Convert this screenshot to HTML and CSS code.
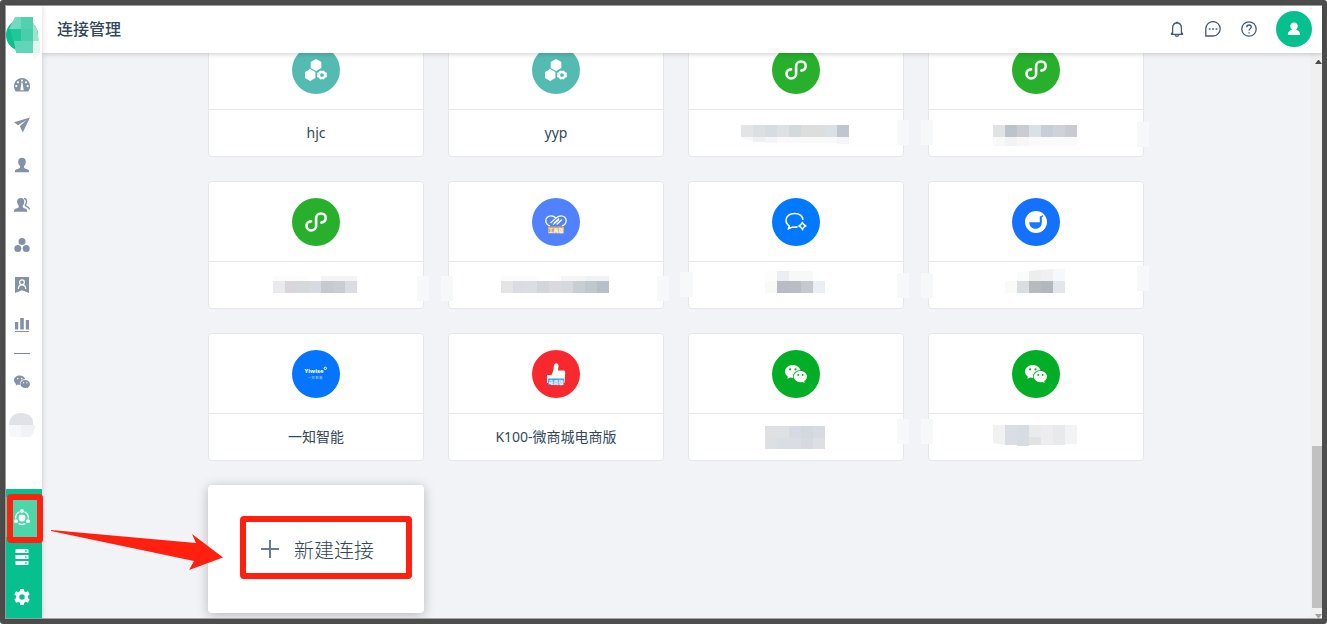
FILE: index.html
```html
<!DOCTYPE html>
<html lang="zh-CN">
<head>
  <meta charset="UTF-8">
  <meta name="viewport" content="width=device-width, initial-scale=1.0">
  <title>连接管理</title>
  <link rel="stylesheet" href="styles.css">
</head>
<body>
  <!-- Shared icons -->
  <svg class="sprite" aria-hidden="true">
    <symbol id="i-user" viewBox="0 0 16 16">
      <path d="M8 .8c2.500 0 3.800 1.600 3.800 3.900 0 1.800-.6 3.400-1.800 4.400v1.300c.4.9 1.400 1.200 2.800 1.600 1.600.5 2.300 1.200 2.300 2.400v.8H.9v-.8c0-1.200.7-1.900 2.300-2.400 1.400-.4 2.400-.7 2.800-1.600V9.100C4.800 8.100 4.200 6.500 4.200 4.700 4.200 2.400 5.500.8 8 .8z"/>
    </symbol>
    <symbol id="i-wechat" viewBox="0 0 22 22">
      <path fill-rule="evenodd" d="M7.800 2C3.500 2 0 4.900 0 8.600c0 2.100 1.100 3.900 2.900 5.100L2.300 16l2.900-1.400c.9.300 2 .5 3.200.5-.2-.6-.3-1.200-.3-1.800 0-3.400 3.200-6 7-6h.4C14.800 4.200 11.600 2 7.800 2zM5.100 5.200a1.100 1.100 0 1 1 0 2.200 1.100 1.100 0 0 1 0-2.200zm5.400 0a1.100 1.100 0 1 1 0 2.200 1.100 1.100 0 0 1 0-2.200z"/>
      <path fill-rule="evenodd" d="M15.400 8.100c-3.700 0-6.600 2.500-6.600 5.500s2.900 5.600 6.600 5.600c.8 0 1.500-.1 2.200-.3l2.100 1.100-.5-1.900c1.700-1 2.800-2.600 2.800-4.500 0-3-2.900-5.500-6.600-5.500zm-2.200 3a.9.900 0 1 1 0 1.800.9.900 0 0 1 0-1.800zm4.500 0a.9.900 0 1 1 0 1.800.9.900 0 0 1 0-1.800z"/>
    </symbol>
    <symbol id="i-mini" viewBox="0 0 22 22">
      <path d="M6 10.400C3.300 10.400 1.500 12.300 1.500 14.800S3.500 19.500 6.200 19.500 11.100 17.500 11.100 14.800V7.200C11.100 4.500 13.100 2.500 15.900 2.500S20.700 4.500 20.700 7 18.900 11.300 16.300 11.600" fill="none" stroke="#fff" stroke-width="2.600" stroke-linecap="round"/>
    </symbol>
    <symbol id="i-hexes" viewBox="0 0 22 22">
      <path d="M11 0l5.300 3v6L11 12 5.700 9V3zM5.200 10l5.200 3v6l-5.200 3L0 19v-6z"/>
      <path fill-rule="evenodd" d="M15.200 11.500l1.800.6 1.800-.6 1.300 1.600 1.900.8-.4 2 .4 2.200-1.900.7-1.300 1.700-1.800-.6-1.800.6-1.300-1.700-1.900-.7.4-2.200-.4-2 1.900-.8zM17 14.200a1.900 1.900 0 1 0 0 3.800 1.900 1.900 0 0 0 0-3.800z"/>
    </symbol>
  </svg>

  <div class="app">
    <aside class="sidebar">
      <a class="logo" href="#" aria-label="首页">
        <svg viewBox="0 0 36 46">
          <circle cx="16" cy="19" r="16" fill="#07c08f"/>
          <path d="M9 1h6v12H3z" fill="#73d9be"/>
          <path d="M15 1h12v12H15z" fill="#50d2ae"/>
          <path d="M4 13h11v12H7z" fill="#1fc79b"/>
          <path d="M15 13h12v12H15z" fill="#48ceab"/>
          <path d="M8 25h19v12H10z" fill="#60d5b8"/>
          <path d="M27 7l4 6 2 12h-6z" fill="#9ee3cf"/>
          <path d="M27 25h7v12h-7z" fill="#e4f5f0"/>
          <path d="M27 37h7q-2 5-7 7z" fill="#f5f7f8"/>
        </svg>
      </a>
      <nav class="side-nav" aria-label="主导航">
        <a href="#" aria-label="仪表盘">
          <svg viewBox="0 0 16 16"><path fill-rule="evenodd" d="M8 1a8 8 0 0 0-8 8c0 2.200.6 4 1.700 5.500h12.600C15.400 13 16 11.200 16 9a8 8 0 0 0-8-8zm0 1.500a1.100 1.100 0 1 1 0 2.200 1.100 1.100 0 0 1 0-2.200zM4 4.200a1.100 1.100 0 1 1 0 2.200 1.100 1.100 0 0 1 0-2.200zm8 0a1.100 1.100 0 1 1 0 2.200 1.100 1.100 0 0 1 0-2.200zM2.300 8a1.100 1.100 0 1 1 0 2.200 1.100 1.100 0 0 1 0-2.200zm11.400 0a1.100 1.100 0 1 1 0 2.200 1.100 1.100 0 0 1 0-2.200zM7.500 5.500h1l1.200 7.800H6.300z"/></svg>
        </a>
        <a href="#" aria-label="营销">
          <svg viewBox="0 0 16 16"><path d="M16 .5L0 5.200l4 3L12.500 3 5.800 9.300l3 6.200z"/></svg>
        </a>
        <a href="#" aria-label="联系人"><svg><use href="#i-user"/></svg></a>
        <a href="#" aria-label="群组">
          <svg viewBox="0 0 16 16"><path d="M6.800 1c2.400 0 3.500 1.500 3.500 3.600 0 1.700-.5 3.200-1.600 4.200v1.300c.3.800 1.300 1.100 2.400 1.500 1.500.5 2.100 1.200 2.100 2.400v.7H0V14c0-1.200.7-1.900 2.200-2.400 1.200-.4 2.200-.7 2.500-1.500V8.800c-1-1-1.600-2.500-1.600-4.200C3.100 2.500 4.300 1 6.800 1z"/><path d="M10 1.500c1.700 0 2.500 1.300 2.500 3 0 1.500-.5 2.700-1.300 3.500.2 1.900 4.200 1.600 4.200 4.500" fill="none" stroke="#8492a6" stroke-width="1.400"/></svg>
        </a>
        <a href="#" aria-label="社群">
          <svg viewBox="0 0 16 16"><circle cx="8" cy="4.500" r="3.500"/><circle cx="3.800" cy="11.500" r="3.500"/><circle cx="12.200" cy="11.500" r="3.500"/></svg>
        </a>
        <a href="#" aria-label="会员">
          <svg viewBox="0 0 16 16"><path d="M1 0h14v16l-7-2.800L1 16z"/><g fill="none" stroke="#fff" stroke-width="1.300"><circle cx="8" cy="5.300" r="2.400"/><path d="M4.300 12c0-2.500 1.500-4.200 3.700-4.200s3.700 1.700 3.700 4.200"/></g></svg>
        </a>
        <a href="#" aria-label="数据">
          <svg viewBox="0 0 16 16"><path d="M1 5h3.200v7.500H1zM6.200 1h3.600v11.500H6.200zM11.800 3H15v9.500h-3.200zM1 14h14v1H1z"/></svg>
        </a>
        <hr>
        <a href="#" aria-label="微信"><svg><use href="#i-wechat"/></svg></a>
        <a class="account" href="#" aria-label="账号">
          <svg class="masked-avatar" viewBox="0 0 26 26"><path d="M0 13C0 5 5 1 12 1s12 4 12 9v3z" fill="#e0e2e8"/><path d="M0 13h12v12H2q-2-4-2-12z" fill="#f6f7f9"/><path d="M12 13h14q0 8-5 12h-9z" fill="#f1f2f5"/></svg>
        </a>
      </nav>
      <nav class="admin-nav" aria-label="管理">
        <a class="active" href="#" aria-label="连接管理">
          <svg viewBox="0 0 16 16"><circle cx="8" cy="9" r="3.400"/><circle cx="8" cy="1.900" r="1.900"/><circle cx="2" cy="12.200" r="1.900"/><circle cx="14" cy="12.200" r="1.900"/><path d="M1.600 9.400C1.600 6 3 4 5.400 2.900M14.400 9.400C14.400 6 13 4 10.600 2.900M4.600 14.600c2.100 1 4.700 1 6.800 0" fill="none" stroke="#fff" stroke-width="1.200"/></svg>
          <span class="mark"></span>
        </a>
        <a href="#" aria-label="存储">
          <svg viewBox="0 0 16 16"><path fill-rule="evenodd" d="M2.200 0h11.600q.7 0 .7.700V4H1.500V.7q0-.7.700-.7zM1.500 6h13v4h-13zM1.500 12h13v3.300q0 .7-.7.700H2.200q-.7 0-.7-.7zM11 1.300v1.400h1.500V1.300zm0 6v1.400h1.500V7.300zm0 6v1.400h1.500v-1.400z"/></svg>
        </a>
        <a href="#" aria-label="设置">
          <svg viewBox="0 0 16 16"><path fill-rule="evenodd" d="M6.200 0h3.600l.4 2.300 1.500.9 2.200-.9 1.800 3.100L13.900 7v2l1.800 1.500-1.800 3.200-2.200-.9-1.500.9-.4 2.300H6.200l-.4-2.300-1.500-.9-2.200.9L.3 10.500 2.100 9V7L.3 5.400l1.800-3.100 2.200.9 1.500-.9zM8 5.300a2.700 2.700 0 1 0 0 5.400 2.700 2.700 0 0 0 0-5.400z"/></svg>
        </a>
      </nav>
    </aside>

    <div class="page">
      <header class="topbar">
        <h1>连接管理</h1>
        <div class="tools">
          <button type="button" aria-label="通知">
            <svg viewBox="0 0 16 16"><path d="M3.600 13.300V7.200c0-3.100 1.700-5.200 4.400-5.200s4.400 2.100 4.400 5.200v6.100M1.800 13.300h12.400M3.600 11l-1.400 2.300M12.400 11l1.400 2.300M6.800 1.400h2.400M6.200 14.200c.5 1.400 3.100 1.400 3.600 0"/></svg>
          </button>
          <button type="button" aria-label="消息">
            <svg viewBox="0 0 16 16"><path d="M.8 15V8A7.200 7.200 0 1 1 8 15z"/><path d="M3.800 8h1.700M7.200 8h1.700M10.600 8h1.700" stroke-width="1.700"/></svg>
          </button>
          <button type="button" aria-label="帮助">
            <svg viewBox="0 0 16 16"><circle cx="8" cy="8" r="7.200"/><path d="M5.700 6.200C5.700 4.700 6.700 4 8 4s2.300.8 2.300 2.100C10.300 7.700 8 7.700 8 9.600M8 11.200v1.200"/></svg>
          </button>
          <button class="avatar" type="button" aria-label="我的账号">
            <svg viewBox="0 0 14 14"><path d="M7 .5c2.300 0 3.700 1.500 3.700 3.600 0 1.600-.7 2.900-1.700 3.700 3 .6 4 2.300 4.200 5.200H.8C1 10.100 2 8.400 5 7.800 4 7 3.300 5.700 3.300 4.100 3.300 2 4.700.5 7 .5z"/></svg>
          </button>
        </div>
      </header>

      <main class="content">
        <div class="scroll-area">
          <div class="card-grid">
            <a class="card" href="#">
              <span class="card-top"><span class="badge teal"><svg><use href="#i-hexes"/></svg></span></span>
              <span class="card-name">hjc</span>
            </a>
            <a class="card" href="#">
              <span class="card-top"><span class="badge teal"><svg><use href="#i-hexes"/></svg></span></span>
              <span class="card-name">yyp</span>
            </a>
            <a class="card" href="#" aria-label="小程序">
              <span class="card-top"><span class="badge green"><svg><use href="#i-mini"/></svg></span></span>
              <span class="card-name">
                <svg class="mosaic" viewBox="0 0 216 46">
                  <path d="M53 15h12v12H53z" fill="#e2e4e5"/><path d="M65 15h12v12H65z" fill="#dbdfe2"/><path d="M77 15h12v12H77z" fill="#d7dce0"/><path d="M89 15h12v12H89z" fill="#dde1e4"/><path d="M101 15h12v12h-12z" fill="#d2dadb"/><path d="M113 15h24v12h-24z" fill="#dcdddd"/><path d="M137 15h12v12h-12z" fill="#dae0e6"/><path d="M149 15h12v12h-12z" fill="#c1c5cf"/>
                  <path d="M53 27h12v4q-8-1-12-4z" fill="#f7f7f7"/><path d="M65 27h12v5H65z" fill="#eeeff1"/><path d="M77 27h12v6H77z" fill="#f4f5f6"/><path d="M89 27h60v6H89z" fill="#f9f9f9"/><path d="M149 27h12v7h-12z" fill="#f4f5f8"/>
                  <path d="M209 10h12v25h-12z" fill="#f7f8fa"/>
                </svg>
              </span>
            </a>
            <a class="card" href="#" aria-label="小程序">
              <span class="card-top"><span class="badge green"><svg><use href="#i-mini"/></svg></span></span>
              <span class="card-name">
                <svg class="mosaic" viewBox="0 0 216 46">
                  <path d="M65 15h12v12H65z" fill="#e1e2e4"/><path d="M77 15h12v12H77z" fill="#bcc3cb"/><path d="M89 15h12v12H89z" fill="#cbccd1"/><path d="M101 15h12v12h-12z" fill="#dae0e3"/><path d="M113 15h12v12h-12z" fill="#c9cdd8"/><path d="M125 15h12v12h-12z" fill="#cfd2d9"/><path d="M137 15h12v12h-12z" fill="#cacbd1"/>
                  <path d="M65 27h12v9H65z" fill="#f7f8f7"/><path d="M77 27h12v9H77z" fill="#f2f3f3"/><path d="M89 27h12v9H89z" fill="#f7f7f7"/><path d="M101 27h48v9h-48z" fill="#fafafa"/>
                  <path d="M-7 10H5v25H-7zM209 12h12v25h-12z" fill="#f7f8fa"/>
                </svg>
              </span>
            </a>

            <a class="card" href="#" aria-label="小程序">
              <span class="card-top"><span class="badge green"><svg><use href="#i-mini"/></svg></span></span>
              <span class="card-name">
                <svg class="mosaic" viewBox="0 0 216 46">
                  <path d="M65 14h36v5H65z" fill="#fcfcfc"/><path d="M113 14h36v5h-36z" fill="#f4f4f5"/>
                  <path d="M65 19h12v12H65z" fill="#e9eaec"/><path d="M77 19h12v12H77z" fill="#d9d6da"/><path d="M89 19h12v12H89z" fill="#d6d9da"/><path d="M101 19h12v12h-12z" fill="#d7dbe1"/><path d="M113 19h12v12h-12z" fill="#c7c9cf"/><path d="M125 19h12v12h-12z" fill="#caccd2"/><path d="M137 19h12v12h-12z" fill="#d9dde1"/>
                  <path d="M209 14h12v25h-12z" fill="#f7f8fa"/>
                </svg>
              </span>
            </a>
            <a class="card" href="#" aria-label="工具版">
              <span class="card-top"><span class="badge indigo">
                <svg viewBox="0 0 22 22">
                  <g fill="none" stroke="#fff" stroke-width="1.300"><path d="M5 15C2.500 14 .8 12.300.8 9.800.8 6.900 3 4.900 6 4.900c2 0 3.500.8 5 2.200M17 15c2.500-1 4.200-2.700 4.200-5.200 0-2.900-2.200-4.900-5.200-4.900-2.600 0-4 1-6 3l-4.500 4.200M14 7.500l-5 4.700M17 8.500l-5.300 4.900M8 13.400l6-5"/></g>
                  <path d="M3 15.500h16v7H3z" fill="#d0a86b"/>
                  <text class="tiny-text" x="11" y="21" font-size="5">工具版</text>
                </svg>
              </span></span>
              <span class="card-name">
                <svg class="mosaic" viewBox="0 0 216 46">
                  <path d="M53 14h36v5H53z" fill="#fbfbfb"/><path d="M113 14h24v5h-24z" fill="#f5f5f5"/><path d="M137 14h24v5h-24z" fill="#f0f1f3"/>
                  <path d="M53 19h12v12H53z" fill="#e5e4e5"/><path d="M65 19h12v12H65z" fill="#dadce2"/><path d="M77 19h12v12H77z" fill="#dadee0"/><path d="M89 19h12v12H89z" fill="#d2d6da"/><path d="M101 19h12v12h-12z" fill="#dad9de"/><path d="M113 19h12v12h-12z" fill="#d5d9db"/><path d="M125 19h12v12h-12z" fill="#c8ced2"/><path d="M137 19h12v12h-12z" fill="#c0c7cd"/><path d="M149 19h12v12h-12z" fill="#b7bfca"/>
                  <path d="M-7 14H5v25H-7zM209 14h12v25h-12z" fill="#f7f8fa"/>
                </svg>
              </span>
            </a>
            <a class="card" href="#" aria-label="在线客服">
              <span class="card-top"><span class="badge blue">
                <svg viewBox="0 0 22 22"><path d="M18 8.800C17.500 4.800 14 2.500 9.500 2.500 4.500 2.500 1 5.300 1 9.300c0 2.500 1.200 4.400 3.200 5.600l-.7 2.900 4-1.800c2.200.4 3.500.2 5-.3" fill="none" stroke="#fff" stroke-width="1.500"/><path fill-rule="evenodd" d="M17.300 10.300l1.400 2 3.200 2.600-3 2-1.200 3.200-2-3.200-3.200-1.900 3-2zm0 2.800l-1.700 2 1.700 1.900 1.900-1.900z"/></svg>
              </span></span>
              <span class="card-name">
                <svg class="mosaic" viewBox="0 0 216 46">
                  <path d="M77 9h12v10H77z" fill="#fdfdfb"/><path d="M89 9h12v10H89z" fill="#ecedf2"/><path d="M101 9h24v10h-24z" fill="#f7f8f8"/>
                  <path d="M77 19h12v12H77z" fill="#f9faf6"/><path d="M89 19h12v12H89z" fill="#b9bbc5"/><path d="M101 19h24v12h-24z" fill="#bbbdc4"/><path d="M113 19h12v12h-12z" fill="#c5c8cd"/><path d="M125 19h12v12h-12z" fill="#ebeef2"/>
                  <path d="M-8 10H5v25H-8zM209 11h12v25h-12z" fill="#f7f8fa"/>
                </svg>
              </span>
            </a>
            <a class="card" href="#" aria-label="互动">
              <span class="card-top"><span class="badge royal">
                <svg viewBox="0 0 22 22"><circle cx="11" cy="11" r="11"/><path d="M4.200 11.300h10.600V5.500L18 4.200v1.500h-1.200v5.600c0 4-2.400 6.500-6.200 6.500s-6.200-2.700-6.400-6.500z" fill="#1677ff"/></svg>
              </span></span>
              <span class="card-name">
                <svg class="mosaic" viewBox="0 0 216 46">
                  <path d="M89 11l12-2v10H89z" fill="#fafbfb"/><path d="M101 9l12-1v11h-12z" fill="#ededee"/><path d="M113 8l12-1v12h-12z" fill="#f0f0f2"/><path d="M125 7h12v12h-12z" fill="#f7f8fb"/>
                  <path d="M77 19h12v12H77z" fill="#fafaf9"/><path d="M89 19h12v12H89z" fill="#dadee0"/><path d="M101 19h12v12h-12z" fill="#b7bbbd"/><path d="M113 19h12v12h-12z" fill="#b3b7c0"/><path d="M125 19h12v12h-12z" fill="#e3e7ec"/>
                  <path d="M-7 11H5v25H-7zM209 4h12v25h-12z" fill="#f7f8fa"/>
                </svg>
              </span>
            </a>

            <a class="card" href="#">
              <span class="card-top"><span class="badge azure">
                <svg viewBox="0 0 22 22">
                  <text class="tiny-text" x="9" y="10" font-size="6">Yiwise</text>
                  <circle cx="20.300" cy="5.300" r="1.200" fill="none" stroke="#fff"/>
                  <text class="tiny-text faint" x="10" y="16" font-size="3">一 知 智 能</text>
                </svg>
              </span></span>
              <span class="card-name">一知智能</span>
            </a>
            <a class="card" href="#">
              <span class="card-top"><span class="badge red">
                <svg viewBox="0 0 22 22">
                  <path d="M2 12h4.500c1.500-3 2-5 2.300-8.500C9 1 10 .2 11.300.2c1.700 0 2.300 1.300 2.100 3.200L13 7.500h6q1.300.1 1.200 1.500L19.500 20H2z"/>
                  <path d="M3 15.500h16v6.500H3z" fill="#3e9bf5"/>
                  <text class="tiny-text" x="11" y="21" font-size="5">电商版</text>
                </svg>
              </span></span>
              <span class="card-name">K100-微商城电商版</span>
            </a>
            <a class="card" href="#" aria-label="公众号">
              <span class="card-top"><span class="badge wechat"><svg><use href="#i-wechat"/></svg></span></span>
              <span class="card-name">
                <svg class="mosaic" viewBox="0 0 216 46">
                  <path d="M77 12h24v12H77z" fill="#dfe0e3"/><path d="M101 12h12v12h-12z" fill="#d7dae2"/><path d="M113 12h12v12h-12z" fill="#d3d8dd"/><path d="M125 12h12v12h-12z" fill="#d8dae1"/>
                  <path d="M77 24h12v11H77z" fill="#dedfe3"/><path d="M89 24h12v11H89z" fill="#d9dee4"/><path d="M101 24h12v11h-12z" fill="#dadde3"/><path d="M113 24h12v11h-12z" fill="#d6d9df"/><path d="M125 24h12v11h-12z" fill="#dddfe5"/>
                  <path d="M209 5h12v25h-12z" fill="#f7f8fa"/>
                </svg>
              </span>
            </a>
            <a class="card" href="#" aria-label="公众号">
              <span class="card-top"><span class="badge wechat"><svg><use href="#i-wechat"/></svg></span></span>
              <span class="card-name">
                <svg class="mosaic" viewBox="0 0 216 46">
                  <path d="M65 11h12v20l-12-2z" fill="#f1f1f1"/><path d="M77 11h12v20H77z" fill="#dbdde5"/><path d="M89 11h12v21H89z" fill="#d7dce3"/><path d="M101 11h12v12h-12z" fill="#e9ebed"/><path d="M101 23h12v8h-12z" fill="#e0e2e4"/><path d="M113 11h12v20h-12z" fill="#ededef"/><path d="M125 11h12v20h-12z" fill="#e8e9eb"/><path d="M137 11h12v19h-12z" fill="#f2f3f5"/>
                  <path d="M-7 5H5v25H-7z" fill="#f7f8fa"/>
                </svg>
              </span>
            </a>

            <button class="card new-card" type="button">
              <svg class="plus" viewBox="0 0 18 18"><path d="M8 0h2v8h8v2h-8v8H8v-8H0V8h8z"/></svg>
              新建连接
              <span class="mark"></span>
            </button>
          </div>
        </div>
        <div class="scrollbar" aria-hidden="true">
          <svg class="up" viewBox="0 0 7 4"><path d="M3 0h1l3 4H0z"/></svg>
          <div class="track"><div class="thumb"></div></div>
          <svg class="down" viewBox="0 0 7 4"><path d="M3 4h1l3-4H0z"/></svg>
        </div>
      </main>
    </div>

    <svg class="arrow" viewBox="0 0 174 40" aria-hidden="true"><path d="M1 0l145 13-4-9 31 23.500-34 12.500 5-9L1 1z"/></svg>
  </div>
</body>
</html>
```
FILE: styles.css
```css
* {
  margin: 0;
  padding: 0;
  box-sizing: border-box;
}

body {
  font-family: "Noto Sans", "Noto Sans CJK SC", sans-serif;
  font-size: 14px;
  color: #33475b;
  background: #fff;
}

a {
  color: inherit;
  text-decoration: none;
}

button {
  font: inherit;
  color: inherit;
  border: none;
  background: none;
  cursor: pointer;
}

.sprite {
  position: absolute;
  width: 0;
  height: 0;
}

/* Window frame */
.app {
  position: relative;
  display: flex;
  height: 100vh;
  border: 5px solid #4d4d4d;
  border-radius: 3px;
  padding: 1px 0 1px 1px;
  background: #a6a6a6;
}

/* Sidebar */
.sidebar {
  position: relative;
  z-index: 3;
  display: flex;
  flex-direction: column;
  flex: none;
  width: 36px;
  background: #fff;
  box-shadow: 0 0 6px rgba(0, 0, 0, 0.16);
}

.logo {
  height: 59px;
  padding-top: 10px;
}

.logo svg {
  display: block;
  width: 36px;
  height: 46px;
}

.side-nav a,
.admin-nav a {
  display: flex;
  align-items: center;
  justify-content: center;
  height: 40px;
  padding-right: 4px;
}

.side-nav svg,
.admin-nav svg {
  width: 16px;
  height: 16px;
  fill: #8492a6;
}

.side-nav hr {
  width: 16px;
  height: 1px;
  margin: 8px;
  border: none;
  background: #7486a0;
}

.side-nav .account {
  padding-top: 6px;
}

.side-nav .masked-avatar {
  width: 26px;
  height: 26px;
}

.admin-nav {
  margin-top: auto;
  padding: 8px 0 1px;
  background: #07c08f;
}

.admin-nav svg {
  fill: #fff;
}

.admin-nav .active {
  position: relative;
  background: #4ed6ab;
}

/* Red highlight marks */
.mark {
  position: absolute;
  border: 6px solid #ff2010;
  border-radius: 4px;
}

.active .mark {
  inset: -3px -1px -6px 1px;
}

.new-card .mark {
  inset: 31px 12px 34px 32px;
}

.arrow {
  position: absolute;
  z-index: 4;
  left: 45px;
  bottom: 49px;
  width: 174px;
  height: 40px;
  fill: #ff2010;
}

/* Page */
.page {
  display: flex;
  flex: 1;
  flex-direction: column;
  min-width: 0;
  background: #f2f3f7;
}

.topbar {
  position: relative;
  z-index: 2;
  display: flex;
  flex: none;
  align-items: center;
  justify-content: space-between;
  height: 47px;
  padding: 0 10px 2px 15px;
  background: #fff;
  box-shadow: 0 1px 5px rgba(0, 0, 0, 0.2);
}

.topbar h1 {
  padding-bottom: 2px;
  font-size: 16px;
  font-weight: 500;
}

.tools {
  display: flex;
  align-items: center;
  gap: 20px;
}

.tools svg {
  display: block;
  width: 16px;
  height: 16px;
  fill: none;
  stroke: #475a73;
  stroke-width: 1.3;
}

.tools .avatar {
  display: flex;
  align-items: center;
  justify-content: center;
  width: 36px;
  height: 36px;
  margin-left: -1px;
  border-radius: 50%;
  background: #07c08f;
}

.avatar svg {
  width: 14px;
  height: 14px;
  fill: #fff;
  stroke: none;
}

.content {
  display: flex;
  flex: 1;
  min-height: 0;
}

/* Scrolled to the last row */
.scroll-area {
  display: flex;
  flex: 1;
  flex-direction: column;
  justify-content: flex-end;
  min-width: 0;
  padding: 0 24px 5px;
  overflow: hidden;
}

.card-grid {
  display: grid;
  grid-template-columns: repeat(4, minmax(0, 1fr));
  gap: 24px;
  width: 100%;
  max-width: 936px;
  margin: 0 auto;
}

/* Connection cards */
.card {
  display: flex;
  flex-direction: column;
  height: 128px;
  border: 1px solid #e5e7ea;
  border-radius: 4px;
  background: #fff;
}

.card-top {
  display: flex;
  justify-content: center;
  padding: 16px 0 15px;
  border-bottom: 1px solid #e5e7ea;
}

.card-name {
  position: relative;
  display: flex;
  flex: 1;
  align-items: center;
  justify-content: center;
  padding-bottom: 2px;
}

.mosaic {
  position: absolute;
  top: 0;
  left: -1px;
  width: 216px;
  height: 46px;
  overflow: visible;
}

.badge {
  display: flex;
  align-items: center;
  justify-content: center;
  width: 48px;
  height: 48px;
  border-radius: 50%;
}

.badge svg {
  width: 22px;
  height: 22px;
  overflow: visible;
  fill: #fff;
}

.teal { background: #54bbb3; }
.green { background: #28b02c; }
.indigo { background: #5082ff; }
.blue { background: #0079ff; }
.royal { background: #1471ff; }
.azure { background: #0575ff; }
.red { background: #f8282f; }
.wechat { background: #02ae26; }

.tiny-text {
  fill: #fff;
  font-weight: bold;
  text-anchor: middle;
}

.tiny-text.faint {
  font-weight: normal;
  opacity: 0.7;
}

.new-card {
  position: relative;
  flex-direction: row;
  align-items: center;
  justify-content: center;
  gap: 15px;
  padding-left: 3px;
  border: none;
  font-size: 20px;
  font-weight: 300;
  box-shadow: 0 2px 12px rgba(0, 0, 0, 0.25);
}

.plus {
  width: 18px;
  height: 18px;
  fill: #6b7b93;
}

/* Scrollbar */
.scrollbar {
  display: flex;
  flex: none;
  flex-direction: column;
  align-items: flex-end;
  gap: 4px;
  width: 12px;
  padding: 7px 0 0 2px;
  background: #f0f0f0;
}

.scrollbar svg {
  width: 7px;
  height: 4px;
}

.up {
  fill: #4d4d4d;
}

.down {
  fill: #a0a0a0;
}

.track {
  display: flex;
  flex: 1;
  flex-direction: column;
  justify-content: flex-end;
  width: 100%;
  padding-bottom: 2px;
}

.thumb {
  height: 30%;
  background: #c1c1c1;
}
```
